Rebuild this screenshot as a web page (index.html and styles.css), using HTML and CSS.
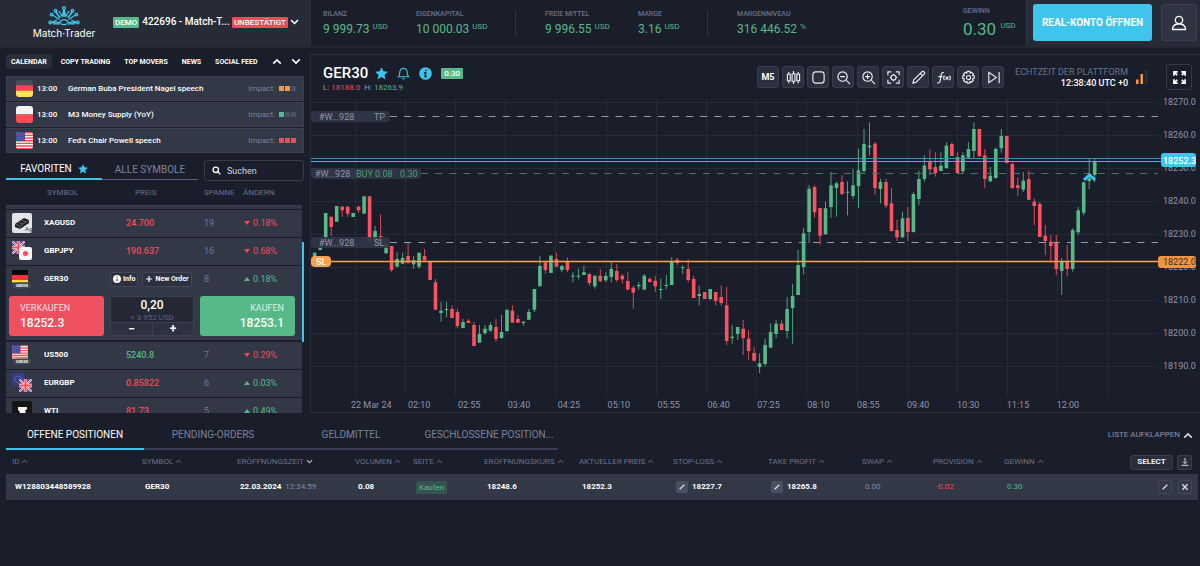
FILE: index.html
```html
<!DOCTYPE html>
<html lang="de">
<head>
<meta charset="utf-8">
<title>Match-Trader</title>
<meta name="viewport" content="width=device-width, initial-scale=1">
<link rel="stylesheet" href="styles.css">
</head>
<body>
<svg class="defs" aria-hidden="true">
  <symbol id="star" viewBox="0 0 14 14"><path fill="currentColor" d="M7 .2l2 4.500 4.900.5-3.700 3.300 1 4.900L7 10.900l-4.200 2.500 1-4.900L.1 5.200l4.900-.5z"/></symbol>
  <symbol id="chev" viewBox="0 0 12 8"><path fill="none" stroke="currentColor" stroke-width="2" d="M1.500 6.500L6 2l4.500 4.500"/></symbol>
  <symbol id="pen" viewBox="0 0 12 12"><path fill="none" stroke="currentColor" stroke-width="2" d="M2.500 9.500l7-7"/></symbol>
  <symbol id="flag-de" viewBox="0 0 18 18"><path fill="#4a4c58" d="M0 0h18v6H0z"/><path fill="#f9424f" d="M0 5.500h18V12H0z"/><path fill="#ffe15a" d="M0 11.500h18V18H0z"/></symbol>
  <symbol id="flag-pl" viewBox="0 0 18 18"><path fill="#f5f5f5" d="M0 0h18v9H0z"/><path fill="#ff4b55" d="M0 9h18v9H0z"/></symbol>
  <symbol id="flag-us" viewBox="0 0 18 18"><path fill="#f5f5f5" d="M0 0h18v18H0z"/><path stroke="#ff4b55" stroke-width="1.500" d="M0 .8h18M0 3.600h18M0 6.400h18M0 9.200h18M0 12h18M0 14.800h18M0 17.600h18"/><path fill="#41479b" d="M0 0h9.500v9.500H0z"/><path stroke="#8f94d0" stroke-dasharray="1 1.300" stroke-width=".8" d="M1 2h8M1.500 4h7M1 6h8M1.500 8h7"/></symbol>
  <symbol id="flag-gb" viewBox="0 0 18 18"><path fill="#41479b" d="M0 0h18v18H0z"/><path stroke="#f5f5f5" stroke-width="2.600" d="M0 0l18 18M18 0L0 18"/><path stroke="#ff4b55" stroke-width="1.200" d="M0 0l18 18M18 0L0 18"/><path stroke="#f5f5f5" stroke-width="4.600" d="M9 0v18M0 9h18"/><path stroke="#ff4b55" stroke-width="3" d="M9 0v18M0 9h18"/></symbol>
</svg>

<header class="top">
  <div class="top-account">
    <div class="logo">
      <svg class="logo-mark" viewBox="0 0 32 20" fill="none" stroke="#3fc5ec" stroke-width="1.300">
        <path d="M12 16.500a4.200 4.200 0 0 1 8 0M2.500 16.500h9.500M20 16.500h9.500M11.500 13.500l-7-4.500M20.500 13.500l7-4.500M4 16l5-2M28 16l-5-2M12.500 12L7.500 6M19.500 12l5-6M14.500 11L11 5M17.500 11L21 5M16 11V3.500M14.500 10l1-6M17.500 10l-1-6M11 11L8 5M21 11l3-6"/>
        <path d="M12.500 17.500q3.500 2.500 7 0M5 17.800h7M20 17.800h7"/>
        <circle cx="2.200" cy="16.500" r="1.300"/><circle cx="29.800" cy="16.500" r="1.300"/><circle cx="3.600" cy="8.600" r="1.300"/><circle cx="28.400" cy="8.600" r="1.300"/><circle cx="7.500" cy="4.800" r="1.300"/><circle cx="24.500" cy="4.800" r="1.300"/><circle cx="16" cy="2" r="1.300"/>
      </svg>
      <span class="logo-text">Match·Trader</span>
    </div>
    <span class="tag tag-green">DEMO</span>
    <span class="account-name">422696 - Match-T...</span>
    <span class="tag tag-red">UNBESTÄTIGT</span>
    <svg class="chev flip" aria-hidden="true"><use href="#chev"/></svg>
  </div>
  <dl class="stats">
    <div class="stat"><dt>BILANZ</dt><dd>9 999.73 <sup>USD</sup></dd></div>
    <div class="stat split"><dt>EIGENKAPITAL</dt><dd>10 000.03 <sup>USD</sup></dd></div>
    <div class="stat after"><dt>FREIE MITTEL</dt><dd>9 996.55 <sup>USD</sup></dd></div>
    <div class="stat split short"><dt>MARGE</dt><dd>3.16 <sup>USD</sup></dd></div>
    <div class="stat after"><dt>MARGENNIVEAU</dt><dd>316 446.52 <sup>%</sup></dd></div>
    <div class="stat profit"><dt>GEWINN</dt><dd>0.30 <sup>USD</sup></dd></div>
  </dl>
  <div class="top-actions">
    <button class="real">REAL-KONTO ÖFFNEN</button>
    <button class="user" aria-label="Profil"><svg viewBox="0 0 16 16" fill="none" stroke="currentColor" stroke-width="1.300"><circle cx="8" cy="5" r="3.700"/><path d="M1.500 14.500c0-3.500 2.500-5 4.500-5.500h4c2 .5 4.500 2 4.500 5.500z"/></svg></button>
  </div>
</header>

<main class="main">
  <aside class="side">
    <nav class="news-tabs">
      <button class="on">CALENDAR</button><button>COPY TRADING</button><button>TOP MOVERS</button><button>NEWS</button><button>SOCIAL FEED</button>
      <span class="arrows"><svg class="chev big"><use href="#chev"/></svg><svg class="chev big flip"><use href="#chev"/></svg></span>
    </nav>
    <ul class="events">
      <li><svg class="flag"><use href="#flag-de"/></svg><time>13:00</time><b>German Buba President Nagel speech</b><span class="impact">Impact: <i class="o"></i><i class="o"></i><i></i></span></li>
      <li><svg class="flag"><use href="#flag-pl"/></svg><time>13:00</time><b>M3 Money Supply (YoY)</b><span class="impact">Impact: <i class="g"></i><i></i><i></i></span></li>
      <li><svg class="flag"><use href="#flag-us"/></svg><time>13:00</time><b>Fed's Chair Powell speech</b><span class="impact">Impact: <i class="r"></i><i class="r"></i><i class="r"></i></span></li>
    </ul>
    <div class="filter">
      <button class="on">FAVORITEN <svg class="star"><use href="#star"/></svg></button>
      <button>ALLE SYMBOLE</button>
      <label class="search"><svg viewBox="0 0 10 10" fill="none" stroke="#fff" stroke-width="1.500"><circle cx="4.200" cy="4.200" r="3"/><path d="M6.500 6.500L9.300 9.300"/></svg><input type="text" placeholder="Suchen" aria-label="Suchen"></label>
    </div>
    <div class="watch">
      <table class="symbols">
        <colgroup><col class="c-ico"><col class="c-name"><col class="c-price"><col class="c-spread"><col class="c-change"></colgroup>
        <thead><tr><th></th><th>SYMBOL</th><th>PREIS</th><th>SPANNE</th><th>ÄNDERN</th></tr></thead>
        <tbody>
          <tr class="cut"><td colspan="5"></td></tr>
          <tr><td><svg class="sym" viewBox="0 0 20 20"><rect width="20" height="20" rx="2" fill="#e3e4e6"/><path fill="#1c1d20" d="M3 11l9-6 5 2v3l-9 6-5-2z"/><path stroke="#72757c" stroke-width=".8" fill="none" d="M3 11l5 2 9-6M8 13v3M6 9l5 2M9 7l5 2"/><text x="13" y="18" font-size="6" fill="#444">Ag</text></svg></td><td class="name">XAGUSD</td><td class="down">24.700</td><td class="spread">19</td><td class="down"><i class="tri tri-down"></i>0.18%</td></tr>
          <tr><td><svg class="sym" viewBox="0 0 20 20"><use href="#flag-gb" width="13" height="13"/><rect x="7" y="6" width="13" height="13" rx="2" fill="#f5f5f5"/><circle cx="13.500" cy="12.500" r="2.600" fill="#ff4b55"/></svg></td><td class="name">GBPJPY</td><td class="down">190.637</td><td class="spread">16</td><td class="down"><i class="tri tri-down"></i>0.68%</td></tr>
          <tr class="open"><td><svg class="sym" viewBox="0 0 20 20"><path fill="#08080a" d="M0 1h16v5H0z"/><path fill="#f9323c" d="M0 6h16v5H0z"/><path fill="#ffda44" d="M0 11h16v2.500H0z"/><rect x="1" y="13.500" width="18" height="6" rx="3" fill="#434856"/><text class="mini" x="4" y="18">GER30</text></svg></td><td class="name">GER30</td><td><span class="row-actions"><button><svg viewBox="0 0 8 8"><circle cx="4" cy="4" r="4" fill="#fff"/><path stroke="#2a2e3b" d="M4 1.500v1M4 3.500v3"/></svg>Info</button><button><svg viewBox="0 0 8 8" stroke="#fff" stroke-width="1.200"><path d="M4 1v6M1 4h6"/></svg>New Order</button></span></td><td class="spread">8</td><td class="up"><i class="tri tri-up"></i>0.18%</td></tr>
          <tr class="order-row"><td colspan="5"><div class="order">
            <button class="sell"><span>VERKAUFEN</span><b>18252.3</b></button>
            <div class="volume"><b>0,20</b><small>≈ 3 952 USD</small><div class="steps"><button>−</button><button>+</button></div></div>
            <button class="buy"><span>KAUFEN</span><b>18253.1</b></button>
          </div></td></tr>
          <tr><td><svg class="sym" viewBox="0 0 20 20"><svg width="16" height="14" viewBox="0 0 18 16"><use href="#flag-us" width="18" height="18"/></svg><rect x="1" y="13.500" width="18" height="6" rx="3" fill="#434856"/><text class="mini" x="4" y="18">US500</text></svg></td><td class="name">US500</td><td class="up">5240.8</td><td class="spread">7</td><td class="down"><i class="tri tri-down"></i>0.29%</td></tr>
          <tr><td><svg class="sym" viewBox="0 0 20 20"><rect width="13" height="13" rx="2" fill="#353b85"/><circle cx="6.500" cy="6.500" r="3.500" fill="none" stroke="#b8a94e" stroke-dasharray="1 1.400"/><use href="#flag-gb" x="7" y="6" width="13" height="13"/></svg></td><td class="name">EURGBP</td><td class="down">0.85822</td><td class="spread">6</td><td class="up"><i class="tri tri-up"></i>0.03%</td></tr>
          <tr><td><svg class="sym" viewBox="0 0 20 20"><rect width="20" height="20" rx="2" fill="#151516"/><path fill="#f5f5f5" d="M6 6h9v2l-2 2 2 4v3H6v-3l2-3-2-2z"/></svg></td><td class="name">WTI</td><td class="down">81.73</td><td class="spread">5</td><td class="up"><i class="tri tri-up"></i>0.49%</td></tr>
        </tbody>
      </table>
      <span class="scroll"></span>
    </div>
  </aside>

  <section class="chart">
    <div class="chart-head">
      <div class="instrument">
        <div class="title"><h1>GER30</h1>
          <svg class="t-star"><use href="#star"/></svg>
          <svg class="t-ico" viewBox="0 0 14 14" fill="none" stroke="currentColor" stroke-width="1.200"><path d="M1.500 10.500h11C11 9 11 8 11 5.500a4 4 0 0 0-8 0C3 8 3 9 1.500 10.500zM5.500 12.700h3"/></svg>
          <svg class="t-ico" viewBox="0 0 14 14"><circle cx="7" cy="7" r="6.800" fill="currentColor"/><path stroke="#1a1e2b" stroke-width="1.500" fill="none" d="M7.500 3v1.600M5.500 6.200h1.700L6.500 10.200h2"/></svg>
          <span class="tag tag-green">0.30</span></div>
        <p class="range">L: <span class="down">18188.0</span> &nbsp;H: <span class="up">18263.9</span></p>
      </div>
      <div class="tools">
        <button>M5</button>
        <button aria-label="Kerzen"><svg viewBox="0 0 16 16"><path d="M3 2v2.500M3 11.500V14M8 1v3M8 12v3M13 2v2.500M13 11.500V14M1.500 4.500h3v7h-3zM6.500 4h3v8h-3zM11.500 4.500h3v7h-3z"/></svg></button>
        <button aria-label="Layout"><svg viewBox="0 0 16 16"><rect x="2" y="2" width="12" height="12" rx="3"/></svg></button>
        <button aria-label="Verkleinern"><svg viewBox="0 0 16 16"><circle cx="7" cy="7" r="5"/><path d="M11 11l4 4M4.500 7h5"/></svg></button>
        <button aria-label="Vergrößern"><svg viewBox="0 0 16 16"><circle cx="7" cy="7" r="5"/><path d="M11 11l4 4M4.500 7h5M7 4.500v5"/></svg></button>
        <button aria-label="Zentrieren"><svg viewBox="0 0 16 16"><path d="M2 5.500V2h3.500M10.500 2H14v3.500M14 10.500V14h-3.500M5.500 14H2v-3.500M8 4v1.300M8 10.700V12M4 8h1.300M10.700 8H12"/><circle cx="8" cy="8" r="2.700"/></svg></button>
        <button aria-label="Zeichnen"><svg viewBox="0 0 16 16"><path d="M2 14l1-3.500L11.500 2a1.200 1.200 0 0 1 2.500 2.500L5.500 13zM10 3.500L12.500 6"/></svg></button>
        <button aria-label="Indikatoren"><svg viewBox="0 0 16 16"><path d="M1.500 13.500c3 1 3-2 3.500-5.500s1-6.500 3.500-5M2.500 7h4.500M9 6q-1.500 2.500 0 5M14.500 6q1.500 2.500 0 5M10.300 7l3 3.200M13.300 7l-3 3.200"/></svg></button>
        <button aria-label="Einstellungen"><svg viewBox="0 0 16 16"><circle cx="8" cy="8" r="2.200"/><path d="M6.700 1.500h2.600l.4 1.800 1.600-.9 1.900 1.900-.9 1.600 1.800.5v2.600l-1.800.5.9 1.600-1.900 1.900-1.600-.9-.4 1.900H6.700l-.5-1.900-1.600.9-1.900-1.900.9-1.600L1.800 9V6.400l1.800-.5-.9-1.600 1.900-1.900 1.600.9z"/></svg></button>
        <button aria-label="Ans Ende"><svg viewBox="0 0 16 16"><path d="M3 2.500v11L11 8zM14 2v12"/></svg></button>
      </div>
      <div class="clock"><span>ECHTZEIT DER PLATTFORM</span><time>12:38:40 UTC +0</time></div>
      <svg class="signal" viewBox="0 0 12 14"><path fill="#f59a3e" d="M0 9.500h2.500V14H0zM4.500 4H7v10H4.500z"/><path fill="#2a2f3d" d="M9 0h2.500v14H9z"/></svg>
      <button class="full" aria-label="Vollbild"><svg viewBox="0 0 14 14" fill="none" stroke="currentColor" stroke-width="1.800"><path d="M1 5V1h4M1.500 1.500l3 3M9 1h4v4M12.500 1.500l-3 3M13 9v4H9M12.500 12.500l-3-3M5 13H1V9M1.500 12.500l3-3"/></svg></button>
    </div>
    <svg class="plot" id="plot" viewBox="311 98 889 314" role="img" aria-label="GER30 M5">
      <g id="grid" class="grid"></g>
      <g id="scale" class="scale"></g>
      <g id="candles"></g>
      <path class="dash" d="M390 116.500h768M390 242.500h768"/>
      <path class="dash dash-buy" d="M421 173.500h737"/>
      <path class="ask" d="M311 158.500h850"/><path class="bid" d="M311 161.500h850"/>
      <path class="stop" d="M330 261.500h830"/>
      <g class="pill"><rect x="311" y="111" width="79" height="11" rx="4"/><rect x="311" y="168" width="110" height="11" rx="4"/><rect x="311" y="237" width="79" height="11" rx="4"/></g>
      <g class="pill-text"><text x="319" y="120">#W...928</text><text x="374" y="120">TP</text><text x="315" y="177">#W...928</text><text class="buy-text" x="356" y="177">BUY 0.08</text><text class="buy-text" x="400" y="177">0.30</text><text x="319" y="246">#W...928</text><text x="374" y="246">SL</text></g>
      <rect x="311" y="256" width="20" height="11" rx="4" fill="#f9a24a"/><text class="tag-text" x="316" y="265">SL</text>
      <path fill="none" stroke="#3fc5ec" stroke-width="3" d="M1084 180l5.500-5 5.500 5"/>
      <rect x="1161" y="153" width="35" height="14" rx="3" fill="#3fc5ec"/><text class="tag-text" x="1163" y="164">18252.3</text>
      <rect x="1158" y="256" width="38" height="12" rx="3" fill="#f29443"/><text class="stop-text" x="1163" y="265">18222.0</text>
    </svg>
  </section>
</main>

<section class="positions">
  <div class="pos-tabs">
    <nav><button class="on">OFFENE POSITIONEN</button><button>PENDING-ORDERS</button><button>GELDMITTEL</button><button>GESCHLOSSENE POSITION...</button></nav>
    <button class="expand">LISTE AUFKLAPPEN <svg class="chev"><use href="#chev"/></svg></button>
  </div>
  <table class="pos">
    <colgroup><col class="w130"><col class="w95"><col class="w118"><col class="w58"><col class="w71"><col class="w95"><col class="w94"><col class="w95"><col class="w94"><col class="w71"><col class="w71"><col class="w94"><col class="w106"></colgroup>
    <thead><tr>
      <th>ID<svg><use href="#chev"/></svg></th><th>SYMBOL<svg><use href="#chev"/></svg></th><th>ERÖFFNUNGSZEIT<svg class="sorted flip"><use href="#chev"/></svg></th><th>VOLUMEN<svg><use href="#chev"/></svg></th><th>SEITE<svg><use href="#chev"/></svg></th><th>ERÖFFNUNGSKURS<svg><use href="#chev"/></svg></th><th>AKTUELLER PREIS<svg><use href="#chev"/></svg></th><th>STOP-LOSS<svg><use href="#chev"/></svg></th><th>TAKE PROFIT<svg><use href="#chev"/></svg></th><th>SWAP<svg><use href="#chev"/></svg></th><th>PROVISION<svg><use href="#chev"/></svg></th><th>GEWINN<svg><use href="#chev"/></svg></th>
      <th><div class="end"><button class="select">SELECT</button><button class="sq" aria-label="Herunterladen"><svg viewBox="0 0 12 12" fill="none" stroke="currentColor" stroke-width="1.500"><path d="M6 0v8M3 5.500l3 3 3-3M1 11h10"/></svg></button></div></th>
    </tr></thead>
    <tbody><tr>
      <td>W128803448589928</td><td>GER30</td><td>22.03.2024 <span class="dim">&nbsp;12:34:59</span></td><td>0.08</td><td><span class="side-tag">Kaufen</span></td><td>18248.6</td><td>18252.3</td>
      <td><button class="edit" aria-label="Stop-Loss ändern"><svg><use href="#pen"/></svg></button>18227.7</td><td><button class="edit" aria-label="Take Profit ändern"><svg><use href="#pen"/></svg></button>18265.8</td>
      <td class="dim">0.00</td><td class="down">-0.02</td><td class="up">0.30</td>
      <td><div class="end"><button class="sq" aria-label="Ändern"><svg><use href="#pen"/></svg></button><button class="sq" aria-label="Schließen"><svg viewBox="0 0 12 12" stroke="currentColor" stroke-width="2.200"><path d="M2 2l8 8M10 2l-8 8"/></svg></button></div></td>
    </tr></tbody>
  </table>
</section>
<script src="chart.js"></script>
</body>
</html>
```

FILE: styles.css
```css
* { box-sizing: border-box; }
body { margin: 0; background: #1a1e2b; color: #fff; font: 10px/12px Roboto, "Liberation Sans", sans-serif; }
button { font: inherit; color: inherit; background: none; border: 0; padding: 0; margin: 0; white-space: nowrap; }
h1, p, dl, dd, ul { margin: 0; padding: 0; }
ul { list-style: none; }
svg { display: block; flex: none; }
.defs { position: absolute; width: 0; height: 0; }
.up { color: #57b988; }
.down { color: #f04a59; }
.chev { width: 9px; height: 6px; }
.flip { transform: rotate(180deg); }
.tag { padding: 0 3px; border-radius: 1px; font-size: 8px; line-height: 11px; font-weight: 500; }
.tag-green { background: #57b988; }
.tag-red { background: #f04a59; }

/* Top bar */
.top { display: flex; height: 48px; border-bottom: 2px solid #232735; }
.top-account { display: flex; align-items: center; width: 310px; padding: 0 11px 2px 32px; background: #272b38; white-space: nowrap; }
.logo { display: flex; flex-direction: column; align-items: center; width: 64px; margin-right: 17px; padding-top: 2px; }
.logo-mark { width: 32px; height: 20px; }
.logo-text { font: 10px/14px Inter, Roboto, sans-serif; }
.account-name { margin: 0 auto 0 3px; font-size: 10px; font-weight: 500; }
.top-account .tag { padding: 0 2px; }
.top-account .chev { margin-left: 2px; }
.stats { display: flex; flex: 1; align-items: flex-start; padding: 10px 12px 0; border-left: 1px solid #2b303e; }
.stat { width: 93px; height: 26px; white-space: nowrap; }
.stat dt { color: #6b7089; font-size: 7px; line-height: 9px; font-weight: 500; }
.stat dd { color: #57b988; font-size: 12px; line-height: 20px; }
.stat sup { font-size: 8px; line-height: 8px; vertical-align: 4px; }
.stat.split { width: 100px; border-right: 1px solid #2f3442; }
.stat.split.short { width: 70px; }
.stat.after { margin-left: 29px; }
.stat.profit { width: 51px; margin-left: auto; margin-top: -3px; }
.stat.profit dd { font-size: 17px; line-height: 26px; }
.stat.profit sup { vertical-align: 7px; }
.top-actions { display: flex; gap: 9px; padding: 4px 3px 2px 6px; background: #272b38; border-left: 1px solid #333847; }
.real { width: 119px; height: 37px; background: #3fc5ec; border-radius: 3px; font-size: 10px; font-weight: 700; }
.user { display: grid; place-items: center; width: 36px; height: 37px; background: #2f3442; border: 1px solid #3b4050; border-radius: 3px; }
.user svg { width: 16px; height: 16px; }

/* Sidebar */
.main { display: flex; }
.side { width: 310px; flex: none; padding: 6px 6px 0; }
.news-tabs { display: flex; align-items: center; height: 22px; padding-bottom: 7px; font-size: 7px; font-weight: 700; }
.news-tabs button { height: 15px; padding: 0 5px; border-radius: 3px; margin-right: 4px; }
.news-tabs .on { background: #2a2e3b; }
.arrows { display: flex; gap: 9px; margin-left: auto; padding-right: 3px; }
.big { width: 10px; height: 7px; }
.events li { display: flex; align-items: center; height: 25px; margin-bottom: 1px; padding: 0 7px 0 9px; background: #333847; border: 1px solid #3b4050; width: 298px; font-size: 9px; font-weight: 500; }
.events b { font-size: 8px; font-weight: 500; }
.flag { width: 17px; height: 17px; border-radius: 3px; }
.events time { width: 31px; margin-left: 4px; font-size: 8px; }
.impact { display: flex; align-items: center; gap: 1px; margin-left: auto; color: #7d8299; font-size: 8px; font-weight: 400; }
.impact i { width: 5px; height: 5px; background: #4a5064; }
.impact i:first-of-type { margin-left: 3px; }
.impact .o { background: #f59a3e; }
.impact .g { background: #57b988; }
.impact .r { background: #f04a59; }
.filter { display: flex; align-items: flex-start; padding-top: 6px; height: 28px; }
.filter button { display: flex; align-items: center; justify-content: center; gap: 6px; width: 96px; height: 20px; border-bottom: 1px solid #5a6078; color: #7d8299; font-size: 10px; }
.filter .on { border-bottom: 2px solid #3fc5ec; color: #fff; }
.star { width: 10px; height: 10px; color: #3fc5ec; }
.search { display: flex; align-items: center; gap: 6px; flex: 1; margin: 0 0 0 6px; height: 21px; padding: 0 7px; border: 1px solid #373c4b; border-radius: 3px; }
.search svg { width: 9px; height: 9px; }
.search input { width: 100%; min-width: 0; padding: 0; border: 0; outline: 0; background: none; color: #fff; font: 9px/12px Roboto, sans-serif; }
.search input::placeholder { color: #d5d8e2; opacity: 1; }
.watch { position: relative; height: 231px; overflow: hidden; }
.symbols { width: 296px; table-layout: fixed; border-collapse: collapse; font-size: 9px; }
.c-ico { width: 38px; } .c-name { width: 66px; } .c-price { width: 94px; } .c-spread { width: 39px; } .c-change { width: 59px; }
.symbols th { height: 23px; padding: 0; text-align: left; color: #6b7089; font-size: 8px; font-weight: 400; }
.symbols th:nth-child(2) { padding-left: 3px; }
.symbols th:nth-child(3) { padding-left: 25px; }
.symbols td { height: 28px; padding: 0; background: #333847; border-bottom: 1px solid #191d29; border-top: 1px solid #3b4050; white-space: nowrap; }
.symbols .cut td { height: 4px; }
.symbols td:first-child { padding-left: 6px; }
.symbols td:nth-child(3) { padding-left: 16px; font-weight: 500; }
.symbols .open td:nth-child(3) { padding-left: 0; }
.symbols .name { font-size: 8px; font-weight: 700; }
.symbols .spread { color: #7379a0; }
.tri { display: inline-block; margin: 0 3px 0 1px; vertical-align: 1px; border: solid transparent; border-width: 0 3px; }
.tri-down { border-top: 4px solid #f04a59; }
.tri-up { border-bottom: 4px solid #57b988; }
.sym { width: 20px; height: 20px; }
.mini { font-size: 4px; font-weight: 700; fill: #fff; }
.symbols .open td { border-bottom: 0; }
.row-actions { display: flex; gap: 4px; font-size: 7px; font-weight: 700; }
.row-actions button { display: flex; align-items: center; gap: 2px; height: 15px; padding: 0 2px; border: 1px solid #434857; border-radius: 3px; background: #2d313f; }
.row-actions svg { width: 8px; height: 8px; }
.symbols .order-row td { height: 48px; padding: 0 0 2px; border-top: 0; border-bottom: 2px solid #191d29; }
.order { display: flex; justify-content: space-between; width: 286px; margin-left: 3px; }
.order .sell, .order .buy { display: flex; flex-direction: column; width: 95px; height: 40px; padding: 6px 11px; border-radius: 3px; text-align: left; font-size: 9px; }
.order .sell { background: #ef505f; }
.order .buy { background: #57b988; align-items: flex-end; }
.order .sell b, .order .buy b { font-size: 12px; line-height: 18px; font-weight: 500; }
.order .sell span, .order .buy span { opacity: .8; }
.volume { width: 84px; height: 40px; text-align: center; background: #242835; border: 1px solid #3b4050; border-radius: 3px; }
.volume b { display: block; font-size: 12px; line-height: 17px; font-weight: 500; }
.volume small { display: block; color: #5c6280; font-size: 8px; line-height: 8px; }
.steps { display: grid; grid-template-columns: 1fr 1fr; background: #2d313f; border-top: 1px solid #3b4050; font-size: 12px; font-weight: 700; }
.steps button + button { border-left: 1px solid #3b4050; }
.scroll { position: absolute; top: 60px; left: 296px; width: 2px; height: 100px; background: #3fc5ec; }

/* Chart */
.chart { flex: 1; min-width: 0; margin-top: 6px; border: solid #2b303e; border-width: 1px 0 1px 1px; }
.chart-head { display: flex; align-items: flex-start; height: 43px; padding: 9px 8px 0 12px; }
.instrument { margin-right: auto; }
.title { display: flex; align-items: center; height: 18px; }
.title h1 { font-size: 15px; font-weight: 500; margin-right: 7px; }
.t-star { width: 13px; height: 13px; color: #3fc5ec; margin-right: 9px; }
.t-ico { width: 13px; height: 13px; color: #3fc5ec; margin-right: 9px; }
.range { color: #9a9fb5; font-size: 8px; line-height: 12px; }
.tools { display: flex; gap: 3px; margin: 2px 11px 0 0; }
.tools button { display: grid; place-items: center; width: 22px; height: 22px; background: #2c303e; border: 1px solid #393e4d; border-radius: 3px; font-size: 9px; font-weight: 700; }
.tools svg { width: 15px; height: 15px; fill: none; stroke: #eef0f5; stroke-width: 1.200; }
.clock { width: 113px; text-align: right; line-height: 11px; padding-top: 3px; font-size: 9px; color: #6b7089; white-space: nowrap; }
.clock span, .clock time { display: block; }
.clock time { color: #fff; font-weight: 500; }
.signal { width: 12px; height: 14px; margin: 6px 18px 0 8px; }
.full { display: grid; place-items: center; width: 26px; height: 26px; border: 1px solid #343948; border-radius: 3px; }
.full svg { width: 13px; height: 13px; }
.plot { width: 100%; height: auto; font-size: 9px; overflow: hidden; }
.grid { stroke: #262b38; stroke-width: 1; }
.scale { fill: #8f94a9; }
.dash { stroke: #989cb2; stroke-width: 1.200; stroke-dasharray: 7 7.100; }
.dash-buy { stroke: #427b60; }
.ask { stroke: #3693b3; }
.bid { stroke: #3fb5dd; }
.stop { stroke: #f9a24a; stroke-width: 1.500; }
.pill { fill: #323747; opacity: .9; }
.pill-text { fill: #8f94a9; }
.pill-text .buy-text { fill: #4a9e75; }
.tag-text { fill: #fff; font-weight: 500; }
.stop-text { fill: #3c3026; }
.rise { stroke: #57b988; }
.fall { stroke: #fa5260; }
.wick { stroke-width: 1; opacity: .85; }
.body { stroke-width: 3.600; }

/* Positions */
.positions { padding: 2px 2px 0 6px; }
.pos-tabs { display: flex; justify-content: space-between; align-items: center; height: 35px; }
.pos-tabs nav { display: flex; align-self: flex-end; }
.pos-tabs nav button { width: 138px; height: 28px; border-bottom: 2px solid #3b4054; color: #7d8299; font-size: 10px; }
.pos-tabs nav .on { border-bottom-color: #3fc5ec; color: #fff; }
.expand { display: flex; align-items: center; gap: 3px; margin: 5px 5px 0 0; color: #8f94a9; font-size: 8px; }
.expand .chev { width: 10px; height: 7px; color: #d5d8e2; }
.pos { width: 100%; table-layout: fixed; border-collapse: collapse; font-size: 8px; }
.w130 { width: 130px; } .w118 { width: 118px; } .w106 { width: 106px; } .w95 { width: 95px; } .w94 { width: 94px; } .w71 { width: 71px; } .w58 { width: 58px; }
.pos th { height: 24px; padding: 0 0 0 6px; text-align: left; color: #6b7089; font-weight: 400; white-space: nowrap; }
.pos th > svg { display: inline-block; width: 7px; height: 5px; margin-left: 2px; color: #4a5064; }
.pos th > .sorted { color: #aeb3c6; }
.pos td { height: 26px; padding: 0 0 0 9px; background: #333847; font-weight: 700; white-space: nowrap; }
.pos .dim, .pos td.up, .pos td.down { font-weight: 400; }
.pos .dim { color: #8388a0; }
.side-tag { display: inline-block; padding: 0 3px; background: #355450; color: #57b988; border-radius: 2px; font-weight: 400; line-height: 13px; }
.edit { display: inline-grid; place-items: center; width: 12px; height: 12px; margin: 0 4px 0 0; background: #4a5064; border-radius: 2px; vertical-align: middle; color: #d5d8e2; }
.edit svg, .sq svg { width: 8px; height: 8px; }
.end { display: flex; justify-content: flex-end; gap: 6px; padding-right: 6px; }
.pos thead .end { gap: 4px; }
.sq { display: grid; place-items: center; width: 14px; height: 14px; border: 1px solid #434857; border-radius: 2px; color: #d5d8e2; }
.select { width: 43px; height: 15px; border: 1px solid #393e4d; border-radius: 3px; background: #2a2e3b; color: #eef0f5; font-weight: 700; font-size: 8px; }
.pos thead .sq { width: 15px; height: 15px; background: #2a2e3b; border-color: #393e4d; }
```

FILE: chart.js
```js
// One entry per five-minute candle: direction, high, body top, body bottom, low.
// Heights are in thirds of a drawing unit below TOP.
const DATA = `
g 428 428 443 443|g 408 408 420 420|g 309 309 385 390|r 320 320 351 378|g 288 288 335 335|r 290 290 301 320|r 288 290 311 320|g 309 309 321 321|r 287 290 301 309|g 259 259 311 311
r 259 259 395 395|g 348 363 390 415|r 313 378 405 410|g 400 403 430 432|r 408 408 480 487|g 427 447 470 472|g 428 444 461 463|r 399 438 459 461|g 438 451 463 476|g 428 428 470 476
r 417 438 451 455|r 456 456 510 510|r 507 517 599 599|g 576 602 609 635|g 575 597 600 622|r 586 597 624 624|r 596 606 648 655|g 627 636 654 654|r 627 632 639 639|r 636 645 708 708
g 645 672 698 698|g 645 656 669 675|g 636 645 662 666|r 627 651 687 695|g 615 666 684 686|g 597 600 663 665|r 586 602 638 638|r 616 627 638 638|g 634 635 639 647|g 597 606 629 631
g 537 537 599 606|g 438 468 529 529|r 454 457 480 491|g 436 437 489 489|r 427 447 470 470|g 464 468 480 487|r 442 456 480 487|g 487 497 500 517|g 476 497 500 508|g 467 487 495 495
r 488 492 519 527|g 497 497 529 536|r 477 497 513 517|g 487 498 511 516|g 456 477 501 517|r 462 483 510 516|r 492 497 508 521|r 487 513 539 541|r 527 533 548 596|g 516 525 529 539
g 492 497 539 539|r 501 507 516 518|r 498 512 529 546|g 506 537 540 567|g 495 525 528 538|g 442 456 525 525|r 444 449 459 466|g 466 472 475 492|r 447 477 510 517|r 497 507 564 564
g 527 552 558 586|r 546 546 567 567|g 537 537 567 570|r 546 546 573 586|r 527 561 579 587|r 531 586 693 705|g 645 680 684 701|g 651 651 672 690|r 630 656 684 735|r 661 686 723 749
r 711 729 752 755|g 730 760 771 789|g 686 705 762 769|g 640 666 713 713|g 630 641 672 685|r 630 641 660 660|g 561 597 663 685|g 521 558 594 701|g 419 465 555 555|g 353 370 471 493
g 225 236 366 399|r 226 231 307 323|r 294 294 377 404|g 276 295 373 373|g 186 226 291 323|g 215 220 234 320|r 196 216 252 254|g 214 245 248 316|g 177 226 258 266|g 116 181 228 294
g 57 102 183 191|g 37 107 112 136|r 96 101 234 254|g 206 216 237 280|r 206 216 287 294|r 235 280 363 365|r 329 360 382 393|g 305 325 382 383|r 291 324 366 393|g 246 252 366 368
g 182 207 267 285|g 136 167 207 215|r 117 156 178 195|r 127 171 189 200|g 127 167 183 183|g 97 107 174 176|r 97 102 138 138|r 127 141 189 191|g 127 136 184 191|g 96 117 143 143
g 37 57 123 146|r 57 57 139 139|r 117 136 207 235|g 171 197 214 216|g 112 117 204 206|g 57 78 115 128|r 78 78 159 160|r 157 162 234 237|r 202 226 234 257|g 186 212 239 246
r 182 207 269 270|r 265 275 288 345|r 276 282 381 381|r 345 377 393 435|r 375 395 408 457|r 375 396 477 495|g 444 455 483 555|r 405 455 477 498|g 355 360 477 485|g 291 301 367 375
g 215 217 308 316|g 147 205 213 237|g 147 153 195 217`.trim().split(/[|\n]/);

const TIMES = "02:10 02:55 03:40 04:25 05:10 05:55 06:40 07:25 08:10 08:55 09:40 10:30 11:15 12:00".split(" ");
const TOP = 110;
const FIRST = 314.7;
const STEP = 5.493;
const NS = "http://www.w3.org/2000/svg";

function add(parent, name, attrs, text) {
  const el = document.createElementNS(NS, name);
  for (const key in attrs) el.setAttribute(key, attrs[key]);
  if (text) el.textContent = text;
  parent.appendChild(el);
}

const grid = document.getElementById("grid");
const scale = document.getElementById("scale");
const candles = document.getElementById("candles");

for (let i = 0; i < 16; i++) {
  const x = Math.floor(355 + i * 50.2) + 0.5;
  add(grid, "path", { d: `M${x} 98V396` });
}
for (let i = 0; i < 9; i++) {
  const y = 102 + i * 33;
  add(grid, "path", { d: `M311 ${y + 0.5}H1158` });
  add(scale, "text", { x: 1163, y: y + 3 }, (18270 - i * 10).toFixed(1));
}
add(scale, "text", { x: 351, y: 408 }, "22 Mar 24");
TIMES.forEach((time, i) => add(scale, "text", { x: 408 + i * 49.9, y: 408 }, time));

DATA.forEach((row, i) => {
  const [dir, ...v] = row.split(" ");
  const [high, top, bottom, low] = v.map((n) => (TOP + n / 3).toFixed(1));
  const x = (FIRST + i * STEP).toFixed(1);
  const tone = dir === "g" ? "rise" : "fall";
  add(candles, "path", { class: `wick ${tone}`, d: `M${x} ${high}V${low}` });
  add(candles, "path", { class: `body ${tone}`, d: `M${x} ${top}V${bottom}` });
});
```
